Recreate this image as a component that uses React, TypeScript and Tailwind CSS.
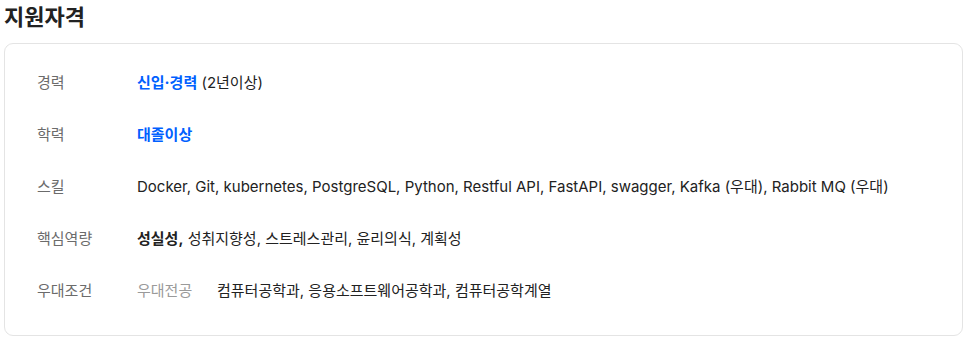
import React from 'react';

// Qualification section of a job posting
interface Row {
  label: string;
  content: React.ReactNode;
}

const rows: Row[] = [
  {
    label: '경력',
    content: (
      <>
        <span className="font-bold text-[#0060ff]">신입·경력</span> (2년이상)
      </>
    ),
  },
  {
    label: '학력',
    content: <span className="font-bold text-[#0060ff]">대졸이상</span>,
  },
  {
    label: '스킬',
    content:
      'Docker, Git, kubernetes, PostgreSQL, Python, Restful API, FastAPI, swagger, Kafka (우대), Rabbit MQ (우대)',
  },
  {
    label: '핵심역량',
    content: (
      <>
        <span className="font-bold">성실성,</span> 성취지향성, 스트레스관리, 윤리의식, 계획성
      </>
    ),
  },
  {
    label: '우대조건',
    content: (
      <div className="flex">
        <span className="w-[80px] text-[#9a9a9a]">우대전공</span>
        <span>컴퓨터공학과, 응용소프트웨어공학과, 컴퓨터공학계열</span>
      </div>
    ),
  },
];

const App: React.FC = () => {
  return (
    <div
      className="w-[967px] h-[339px] bg-white px-[4px] pt-[2px]"
      style={{ fontFamily: 'Inter, "Noto Sans CJK KR", sans-serif' }}
    >
      <h2 className="text-[22px] leading-[30px] font-bold text-[#222]">지원자격</h2>
      <div className="mt-[11px] w-[959px] h-[293px] rounded-[9px] border border-[#e4e4e4] pl-[32px] pt-[13px]">
        {rows.map((row) => (
          <div key={row.label} className="flex items-center h-[52px] text-[15px]">
            <div className="w-[100px] text-[#6b6b6b]">{row.label}</div>
            <div className="text-[#222]">{row.content}</div>
          </div>
        ))}
      </div>
    </div>
  );
};

export default App;
